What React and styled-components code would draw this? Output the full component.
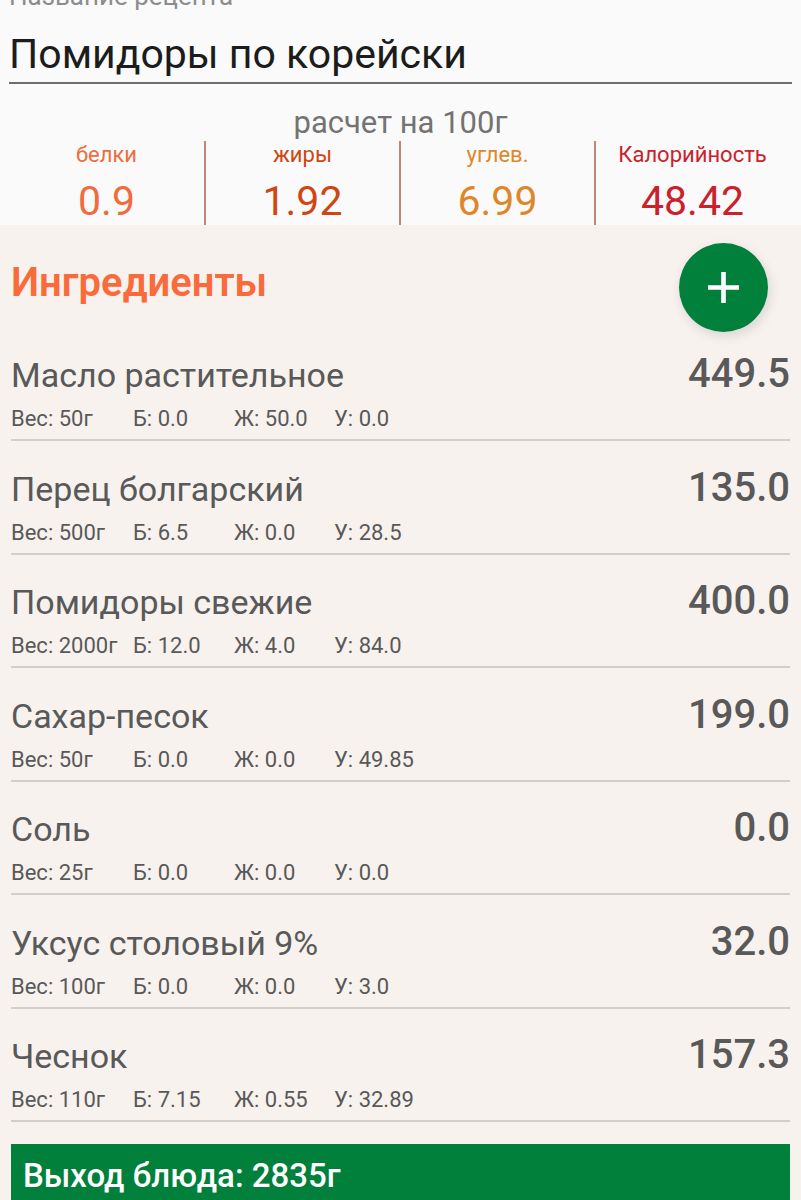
import React from 'react';
import styled, { createGlobalStyle } from 'styled-components'

const nutrients = [
    { name: 'белки', value: '0.9', color: '#ee6c3e' },
    { name: 'жиры', value: '1.92', color: '#cd4712' },
    { name: 'углев.', value: '6.99', color: '#df862b' },
    { name: 'Калорийность', value: '48.42', color: '#ca212c' },
]

const ingredients = [
    { name: 'Масло растительное', kcal: '449.5', weight: '50г', b: '0.0', f: '50.0', c: '0.0' },
    { name: 'Перец болгарский', kcal: '135.0', weight: '500г', b: '6.5', f: '0.0', c: '28.5' },
    { name: 'Помидоры свежие', kcal: '400.0', weight: '2000г', b: '12.0', f: '4.0', c: '84.0' },
    { name: 'Сахар-песок', kcal: '199.0', weight: '50г', b: '0.0', f: '0.0', c: '49.85' },
    { name: 'Соль', kcal: '0.0', weight: '25г', b: '0.0', f: '0.0', c: '0.0' },
    { name: 'Уксус столовый 9%', kcal: '32.0', weight: '100г', b: '0.0', f: '0.0', c: '3.0' },
    { name: 'Чеснок', kcal: '157.3', weight: '110г', b: '7.15', f: '0.55', c: '32.89' },
]

const App = () => {
    return (
        <Page>
            <GlobalStyle />
            <Header>
                <Label htmlFor='recipe'>Название рецепта</Label>
                <NameInput id='recipe' type='text' defaultValue='Помидоры по корейски' />
                <Caption>расчет на 100г</Caption>
                <Totals>
                    {nutrients.map((item) => (
                        <Total key={item.name} $color={item.color}>
                            <dt>{item.name}</dt>
                            <dd>{item.value}</dd>
                        </Total>
                    ))}
                </Totals>
            </Header>
            <Content>
                <TitleRow>
                    <Title>Ингредиенты</Title>
                    <AddButton type='button' aria-label='Добавить ингредиент'>
                        <svg width='31' height='31' viewBox='0 0 31 31' aria-hidden='true'>
                            <path d='M15.5 0v31M0 15.5h31' stroke='#fff' strokeWidth='4.6' />
                        </svg>
                    </AddButton>
                </TitleRow>
                <List>
                    {ingredients.map((item) => (
                        <Item key={item.name}>
                            <ItemTop>
                                <Name>{item.name}</Name>
                                <Kcal>{item.kcal}</Kcal>
                            </ItemTop>
                            <Details>
                                <span>Вес: {item.weight}</span>
                                <span>Б: {item.b}</span>
                                <span>Ж: {item.f}</span>
                                <span>У: {item.c}</span>
                            </Details>
                        </Item>
                    ))}
                </List>
                <Output>Выход блюда: 2835г</Output>
            </Content>
        </Page>
    );
};

export default App;

const GlobalStyle = createGlobalStyle`
    * {
        box-sizing: border-box;
    }
    body {
        margin: 0;
        background: #f7f2ee;
        font-family: Roboto, 'Noto Sans', sans-serif;
    }
`

const Page = styled.main`
    min-height: 100vh;
    color: #595959;
`

const Header = styled.header`
    display: flex;
    flex-direction: column;
    background: #fafafa;
`

const Label = styled.label`
    display: flex;
    align-items: flex-end;
    height: 10px;
    padding: 0 9px;
    overflow: hidden;
    font-size: 26px;
    line-height: 28px;
    color: #8c8c8c;
`

const NameInput = styled.input`
    height: 74px;
    margin: 0 9px;
    padding: 16px 0 0;
    border: 0;
    border-bottom: 2px solid #6e6e6e;
    outline: none;
    background: transparent;
    font-family: inherit;
    font-size: 41px;
    color: #1c1c1c;
`

const Caption = styled.p`
    margin: 0;
    padding-top: 21px;
    text-align: center;
    font-size: 31px;
    line-height: 36px;
    color: #737373;
`

const Totals = styled.dl`
    display: grid;
    grid-template-columns: repeat(4, 1fr);
    margin: 0;
    padding: 0 12px 0 9px;
`

const Total = styled.div`
    text-align: center;
    color: ${({ $color }) => $color};
    & + & {
        border-left: 2px solid #c08678;
    }
    dt {
        font-size: 22px;
        line-height: 28px;
    }
    dd {
        margin: 0;
        padding-top: 8px;
        font-size: 41px;
        line-height: 48px;
    }
`

const Content = styled.section`
    padding: 0 11px;
`

const TitleRow = styled.div`
    display: flex;
    justify-content: space-between;
    align-items: flex-start;
    height: 103px;
    padding: 18px 22px 0 0;
`

const Title = styled.h1`
    margin: 0;
    padding-top: 16px;
    font-size: 40px;
    line-height: 48px;
    font-weight: 600;
    color: #f96b3b;
`

const AddButton = styled.button`
    display: flex;
    align-items: center;
    justify-content: center;
    width: 89px;
    height: 89px;
    padding: 0;
    border: 0;
    border-radius: 50%;
    background: #01803c;
    box-shadow: 2px 4px 12px rgba(0, 0, 0, 0.12);
    cursor: pointer;
`

const List = styled.ul`
    margin: 0;
    padding: 0;
    list-style: none;
`

const Item = styled.li`
    padding: 18px 0 5px;
    border-bottom: 2px solid #d2cecc;
    &:nth-child(even) {
        padding-top: 19px;
    }
`

const ItemTop = styled.div`
    display: flex;
    justify-content: space-between;
    align-items: baseline;
    height: 58px;
    line-height: 56px;
`

const Name = styled.span`
    font-size: 34px;
`

const Kcal = styled.span`
    font-size: 40px;
    font-weight: 500;
`

const Details = styled.div`
    display: grid;
    grid-template-columns: 122px 101px 100px 1fr;
    font-size: 22px;
    line-height: 30px;
    white-space: nowrap;
`

const Output = styled.div`
    margin-top: 22px;
    padding: 8px 12px;
    background: #01803c;
    font-size: 33px;
    line-height: 48px;
    font-weight: 500;
    color: #fff;
`
